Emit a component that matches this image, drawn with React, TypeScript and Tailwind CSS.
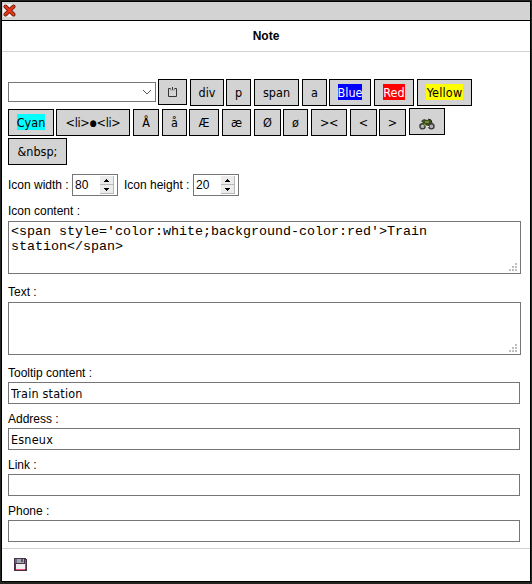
import React from 'react';

type BtnProps = { className: string; children: React.ReactNode };

function Btn({ className, children }: BtnProps) {
  return (
    <button
      type="button"
      className={
        'flex shrink-0 items-center justify-center border border-black bg-[#d3d3d3] font-["DejaVu_Sans_Condensed","DejaVu_Sans",sans-serif] text-[12.5px] leading-4 whitespace-nowrap [font-stretch:condensed] ' +
        className
      }
    >
      {children}
    </button>
  );
}

function Mark({ className, children }: BtnProps) {
  return <span className={'mb-px flex h-4 items-center justify-center leading-[17px] ' + className}>{children}</span>;
}

function Label({ children }: { children: React.ReactNode }) {
  return <label className="block h-[15px] leading-[15px] whitespace-nowrap">{children}</label>;
}

function Spinner({ value }: { value: string }) {
  return (
    <div className="flex h-[22px] w-[46px] items-center justify-between border border-[#767676] bg-white pl-[2px] pr-[3px]">
      <span className="text-[12px] leading-5">{value}</span>
      <svg width="14" height="18" viewBox="0 0 14 18" shapeRendering="crispEdges">
        <rect width="14" height="18" fill="#b8b8b8" />
        <rect width="13" height="8" fill="#ececec" />
        <rect y="9" width="13" height="8" fill="#ececec" />
        <path d="M6 3h1v1h1v1h1v1H4V5h1V4h1zM4 12h5v1H8v1H7v1H6v-1H5v-1H4z" fill="#000" />
      </svg>
    </div>
  );
}

function Area({ value }: { value: string }) {
  return (
    <div className="relative h-[53px] w-[513px]">
      <textarea
        readOnly
        value={value}
        className='block h-full w-full resize-none overflow-hidden border border-[#767676] bg-white px-[2px] pt-[2px] font-["Liberation_Mono",monospace] text-[13.333px] leading-[15px] outline-none'
      />
      <svg className="absolute right-[4px] bottom-[3px]" width="8" height="8" shapeRendering="crispEdges">
        <path d="M6 0h2v2H6zM3 3h2v2H3zM6 3h2v2H6zM0 6h2v2H0zM3 6h2v2H3zM6 6h2v2H6z" fill="#bfbfbf" />
      </svg>
    </div>
  );
}

function Field({ label, value }: { label: string; value: string }) {
  return (
    <div className="mb-[8px]">
      <Label>{label}</Label>
      <input
        readOnly
        value={value}
        className='mt-[1px] block h-[22px] w-[512px] border border-[#767676] bg-white px-[2px] font-["DejaVu_Sans_Condensed","DejaVu_Sans",sans-serif] text-[12.5px] tracking-[0.2px] [font-stretch:condensed] outline-none'
      />
    </div>
  );
}

export default function App() {
  return (
    <div className='h-[584px] w-[532px] bg-[#22241f] p-px font-["Liberation_Sans",sans-serif] text-[12px] text-black'>
      <div className="flex h-[581px] w-[530px] flex-col border border-black bg-white">
        <div className="h-[19px] shrink-0 border-b border-black bg-[#d3d3d3] pt-[2px] pl-px">
          <svg width="13" height="13" viewBox="0 0 13 13">
            <path d="M0 0h10v13H0z" fill="#f4f0ee" />
            <path d="M2.5 2.5l8 8M10.5 2.5l-8 8" stroke="#6b2415" strokeWidth="4" strokeLinecap="round" />
            <path d="M2.5 2.5l8 8M10.5 2.5l-8 8" stroke="#ee3418" strokeWidth="2.4" strokeLinecap="round" />
          </svg>
        </div>
        <div className="h-[31px] shrink-0 border-b border-[#d3d3d3] pt-[8px] text-center font-bold leading-[15px]">Note</div>
        <div className="h-[496px] shrink-0 pt-[27px] pl-[6px]">
          <div className="flex h-[30px] items-start">
            <div className="mt-[3px] mr-[2px] flex h-[20px] w-[148px] items-center justify-end border border-[#767676] pr-[3px]">
              <svg width="10" height="10" viewBox="0 0 10 10" fill="none" stroke="#555">
                <path d="M1 3l4 4 4-4" />
              </svg>
            </div>
            <Btn className="mr-[3px] h-[26px] w-[29px]">
              <svg width="10" height="10" viewBox="0 0 10 10" fill="none" stroke="#343434">
                <path d="M3 1.5H.5v8h8v-8H6M4.5 0v3" />
                <path d="M2.5 1v2h4V1" stroke="#8a8078" strokeWidth="0.8" />
              </svg>
            </Btn>
            <Btn className="mr-[2px] h-[27px] w-[34px]">div</Btn>
            <Btn className="mr-[3px] h-[27px] w-[25px]">p</Btn>
            <Btn className="mr-[3px] h-[27px] w-[45px]">span</Btn>
            <Btn className="mr-[2px] h-[27px] w-[25px]">a</Btn>
            <Btn className="mr-[3px] h-[27px] w-[42px]"><Mark className="w-[24px] bg-[#0000ff] text-white">Blue</Mark></Btn>
            <Btn className="mr-[3px] h-[27px] w-[40px]"><Mark className="w-[22px] bg-[#ff0000] text-white">Red</Mark></Btn>
            <Btn className="h-[27px] w-[55px]"><Mark className="w-[37px] bg-[#ffff00] tracking-[0.2px]">Yellow</Mark></Btn>
          </div>
          <div className="flex h-[29px] items-start">
            <Btn className="mr-[2px] h-[27px] w-[46px]"><Mark className="w-[28px] bg-[#00ffff]">Cyan</Mark></Btn>
            <Btn className="mr-[3px] h-[27px] w-[74px]">
              <span className="tracking-[-0.3px]">&lt;li&gt;</span>
              <span className="text-[9px]">●</span>
              <span className="tracking-[-0.3px]">&lt;li&gt;</span>
            </Btn>
            <Btn className="mr-[3px] h-[27px] w-[26px]">Å</Btn>
            <Btn className="mr-[2px] h-[27px] w-[25px]">å</Btn>
            <Btn className="mr-[3px] h-[27px] w-[30px]">Æ</Btn>
            <Btn className="mr-[3px] h-[27px] w-[29px]">æ</Btn>
            <Btn className="mr-[2px] h-[27px] w-[27px]">Ø</Btn>
            <Btn className="mr-[3px] h-[27px] w-[25px]">ø</Btn>
            <Btn className="mr-[3px] h-[27px] w-[36px] tracking-[-0.5px]">&gt;&lt;</Btn>
            <Btn className="mr-[2px] h-[27px] w-[27px]">&lt;</Btn>
            <Btn className="mr-[3px] h-[27px] w-[27px]">&gt;</Btn>
            <Btn className="-mt-px h-[27px] w-[36px]">
              <svg className="mt-[5px]" width="16" height="12" viewBox="0 0 16 12" fill="none">
                <path d="M2 3l3-2 3 1 3-1 2 3-2 4H6L4 5z" fill="#40491f" />
                <circle cx="3.5" cy="8.3" r="2.6" fill="#b0b0b0" stroke="#3a3a3a" strokeWidth="1.4" />
                <circle cx="12.4" cy="8.3" r="2.6" fill="#b0b0b0" stroke="#3a3a3a" strokeWidth="1.4" />
                <path d="M6 4h4M5 6l2 2h2" stroke="#78a832" strokeWidth="1.3" />
                <path d="M9 1l3 1 1 3" stroke="#222" />
                <path d="M7 8.5h3" stroke="#ddd" />
              </svg>
            </Btn>
          </div>
          <Btn className="h-[27px] w-[59px]">&amp;nbsp;</Btn>
          <div className="mt-[9px] flex h-[22px] items-center">
            <span className="w-[64px] whitespace-nowrap">Icon width :</span>
            <Spinner value="80" />
            <span className="ml-[6px] w-[69px] whitespace-nowrap">Icon height :</span>
            <Spinner value="20" />
          </div>
          <div className="mt-[8px]">
            <Label>Icon content :</Label>
            <div className="mt-[2px]">
              <Area value="<span style='color:white;background-color:red'>Train station</span>" />
            </div>
          </div>
          <div className="mt-[11px] mb-[11px]">
            <Label>Text :</Label>
            <div className="mt-[2px]">
              <Area value="" />
            </div>
          </div>
          <Field label="Tooltip content :" value="Train station" />
          <Field label="Address :" value="Esneux" />
          <Field label="Link :" value="" />
          <Field label="Phone :" value="" />
        </div>
        <div className="flex-1 border-t border-[#d3d3d3] pt-[9px] pl-[12px]">
          <svg width="13" height="13" viewBox="0 0 13 13" shapeRendering="crispEdges">
            <path d="M0 0h12v1h1v12H0z" fill="#4a3348" />
            <path d="M1 1h2v4H1zM11 2h1v9h-1z" fill="#686b80" />
            <path d="M3 1h7v4H3z" fill="#a5a8ae" />
            <path d="M7 1h2v3H7z" fill="#565966" />
            <path d="M2 6h9v6H2z" fill="#f0f0f0" />
            <path d="M2 11h9v1H2z" fill="#ee5377" />
          </svg>
        </div>
      </div>
    </div>
  );
}
